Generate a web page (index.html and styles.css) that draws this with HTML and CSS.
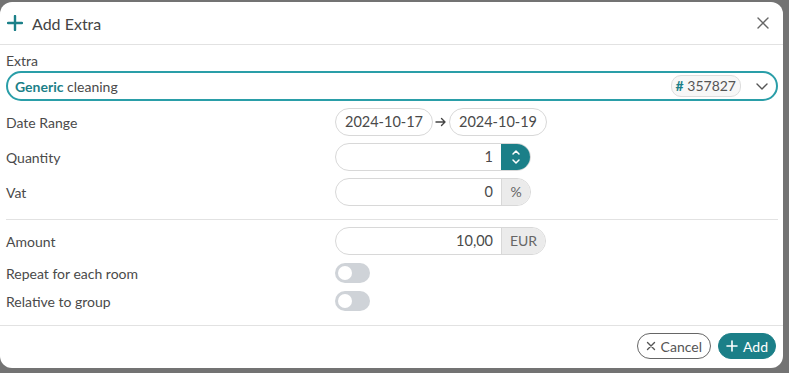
FILE: index.html
```html
<!DOCTYPE html>
<html lang="en">

<head>
    <meta charset="UTF-8">
    <meta name="viewport" content="width=device-width, initial-scale=1.0">
    <title>Add Extra</title>
    <link rel="stylesheet" href="styles.css">
</head>

<body>
    <div class="modal">
        <header class="modal-header">
            <svg class="title-icon" width="16" height="16" viewBox="0 0 16 16">
                <path d="M8 1v14M1 8h14" stroke="#1b8089" stroke-width="2.4" stroke-linecap="round" fill="none"/>
            </svg>
            <h1>Add Extra</h1>
            <svg class="close" width="14" height="14" viewBox="0 0 14 14">
                <path d="M2 2l10 10M12 2L2 12" stroke="#666" stroke-width="1.4" stroke-linecap="round" fill="none"/>
            </svg>
        </header>

        <section class="modal-body">
            <label class="field-label">Extra</label>
            <div class="select">
                <span class="select-text"><b>Generic</b> cleaning</span>
                <span class="badge"><b>#</b> 357827</span>
                <svg class="chevron" width="14" height="14" viewBox="0 0 14 14">
                    <path d="M2 5l5 5 5-5" stroke="#555" stroke-width="1.4" stroke-linecap="round" stroke-linejoin="round" fill="none"/>
                </svg>
            </div>

            <div class="row">
                <span class="label">Date Range</span>
                <div class="dates">
                    <span class="pill">2024-10-17</span>
                    <svg class="arrow" width="12" height="10" viewBox="0 0 12 10">
                        <path d="M1 5h9M6.5 1.5L10 5 6.5 8.5" stroke="#444" stroke-width="1.4" stroke-linecap="round" stroke-linejoin="round" fill="none"/>
                    </svg>
                    <span class="pill">2024-10-19</span>
                </div>
            </div>

            <div class="row">
                <span class="label">Quantity</span>
                <div class="group w196">
                    <span class="value">1</span>
                    <span class="spinner">
                        <svg width="10" height="18" viewBox="0 0 10 18">
                            <path d="M2 6l3-3 3 3M2 12l3 3 3-3" stroke="#fff" stroke-width="1.5" stroke-linecap="round" stroke-linejoin="round" fill="none"/>
                        </svg>
                    </span>
                </div>
            </div>

            <div class="row">
                <span class="label">Vat</span>
                <div class="group w196">
                    <span class="value">0</span>
                    <span class="addon">%</span>
                </div>
            </div>

            <hr class="divider">

            <div class="row">
                <span class="label">Amount</span>
                <div class="group w211">
                    <span class="value">10,00</span>
                    <span class="addon eur">EUR</span>
                </div>
            </div>

            <div class="row small">
                <span class="label">Repeat for each room</span>
                <span class="toggle"></span>
            </div>

            <div class="row small">
                <span class="label">Relative to group</span>
                <span class="toggle"></span>
            </div>
        </section>

        <footer class="modal-footer">
            <button class="btn btn-cancel">
                <svg width="10" height="10" viewBox="0 0 10 10">
                    <path d="M1.5 1.5l7 7M8.5 1.5l-7 7" stroke="#555" stroke-width="1.4" stroke-linecap="round" fill="none"/>
                </svg>
                Cancel
            </button>
            <button class="btn btn-add">
                <svg width="12" height="12" viewBox="0 0 12 12">
                    <path d="M6 1v10M1 6h10" stroke="#fff" stroke-width="1.6" stroke-linecap="round" fill="none"/>
                </svg>
                Add
            </button>
        </footer>
    </div>
</body>

</html>
```

FILE: styles.css
```css
body {
    font-family: 'Lato', 'Noto Sans', sans-serif;
    margin: 0;
    padding: 0;
    background: #737373;
    color: #4a4a4a;
    font-size: 14px;
}

.modal {
    background: #fff;
    width: 783px;
    height: 366px;
    margin-top: 2px;
    border-radius: 12px;
    display: flex;
    flex-direction: column;
}

.modal-header {
    height: 42px;
    display: flex;
    align-items: center;
    border-bottom: 1px solid #e2e2e2;
    padding: 0 13px 0 7px;
}

.title-icon {
    margin-right: 9px;
}

h1 {
    margin: 0;
    font-size: 16px;
    font-weight: 400;
    color: #444;
    flex: 1;
}

.modal-body {
    padding: 8px 5px 14px 6px;
    border-bottom: 1px solid #e2e2e2;
}

.field-label {
    display: block;
    line-height: 16px;
    margin-bottom: 2px;
}

.select {
    height: 26px;
    border: 2px solid #2a9ea8;
    border-radius: 15px;
    display: flex;
    align-items: center;
    padding: 0 7px 0 7px;
}

.select-text {
    flex: 1;
}

.select-text b {
    color: #1b7f88;
    font-weight: 700;
}

.badge {
    border: 1px solid #ddd;
    background: #f7f7f7;
    border-radius: 10px;
    padding: 1px 4px;
    line-height: 18px;
    color: #555;
}

.badge b {
    color: #1b7f88;
}

.chevron {
    margin-left: 14px;
}

.row {
    display: flex;
    align-items: center;
    height: 28px;
    margin-top: 7px;
}

.row.small {
    height: 20px;
    margin-top: 8px;
}

.label {
    width: 329px;
}

.dates {
    display: flex;
    align-items: center;
}

.pill {
    height: 26px;
    line-height: 26px;
    border: 1px solid #d8d8d8;
    border-radius: 14px;
    width: 96px;
    text-align: center;
    font-size: 14.5px;
}

.arrow {
    margin: 0 2px;
}

.group {
    display: flex;
    height: 26px;
    border: 1px solid #d8d8d8;
    border-radius: 14px;
    overflow: hidden;
}

.w196 {
    width: 194px;
}

.w211 {
    width: 209px;
}

.value {
    flex: 1;
    text-align: right;
    line-height: 26px;
    padding-right: 8px;
    font-size: 14.5px;
}

.spinner {
    width: 29px;
    background: #1b7f88;
    display: flex;
    align-items: center;
    justify-content: center;
}

.addon {
    width: 28px;
    background: #ebebeb;
    border-left: 1px solid #d8d8d8;
    text-align: center;
    line-height: 26px;
    color: #666;
}

.addon.eur {
    width: 43px;
}

.divider {
    border: none;
    border-top: 1px solid #e2e2e2;
    margin: 13px 0 0 0;
}

.toggle {
    width: 35px;
    height: 20px;
    background: #cfd3d8;
    border-radius: 10px;
    position: relative;
}

.toggle::after {
    content: '';
    position: absolute;
    left: 3px;
    top: 3px;
    width: 14px;
    height: 14px;
    border-radius: 50%;
    background: #fff;
}

.modal-footer {
    display: flex;
    justify-content: flex-end;
    gap: 7px;
    padding: 7px 7px 0 0;
}

.btn {
    height: 26px;
    border-radius: 13px;
    font-family: inherit;
    font-size: 14px;
    display: flex;
    align-items: center;
    gap: 5px;
    padding: 0 7px;
    cursor: pointer;
}

.btn-cancel {
    background: #fff;
    border: 1px solid #666;
    color: #555;
    padding: 0 8px;
}

.btn-add {
    background: #1b7f88;
    border: 1px solid #1b7f88;
    color: #fff;
}
```
